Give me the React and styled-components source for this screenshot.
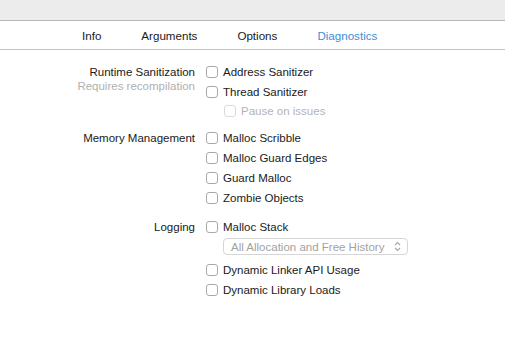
import React from 'react';
import styled, { createGlobalStyle } from 'styled-components';

const GlobalStyle = createGlobalStyle`
  html, body {
    margin: 0;
    padding: 0;
    background: #ffffff;
  }
  body {
    font-family: "Liberation Sans", Arial, sans-serif;
    font-size: 11px;
    color: #1a1a1a;
  }
`;

const Window = styled.div`
  width: 505px;
  height: 348px;
  background: #ffffff;
  overflow: hidden;
`;

const TitleBand = styled.div`
  height: 20px;
  background: #ececec;
  border-bottom: 1px solid #b8b8b8;
`;

const TabBar = styled.nav`
  height: 28px;
  display: flex;
  align-items: center;
  gap: 40px;
  padding-left: 82px;
  border-bottom: 1px solid #c4c4c4;
`;

const Tab = styled.span`
  font-size: 11.6px;
  color: ${(p) => (p.$active ? '#3d8ed6' : '#1a1a1a')};
`;

const Content = styled.div`
  padding-top: 12px;
  display: flex;
  flex-direction: column;
  gap: 9px;
`;

const Section = styled.section`
  display: grid;
  grid-template-columns: 195px 1fr;
  column-gap: 11px;
`;

const Label = styled.div`
  text-align: right;
  font-size: 11.5px;
  line-height: 20px;
`;

const Hint = styled.div`
  text-align: right;
  color: #b0b0b0;
  font-size: 11.5px;
  line-height: 9px;
`;

const Options = styled.div`
  display: flex;
  flex-direction: column;
`;

const Row = styled.label`
  display: flex;
  align-items: center;
  gap: 5px;
  height: ${(p) => (p.$short ? 17 : 20)}px;
  padding-left: ${(p) => (p.$indent ? 18 : 0)}px;
  font-size: 11.5px;
  color: ${(p) => (p.$disabled ? '#b4b4b4' : '#1a1a1a')};
`;

const Box = styled.span`
  width: 12px;
  height: 12px;
  box-sizing: border-box;
  border: 1px solid ${(p) => (p.$disabled ? '#dadada' : '#a9a9a9')};
  border-radius: 3px;
  background: #ffffff;
  flex: none;
`;

const PopupRow = styled.div`
  height: 23px;
  box-sizing: border-box;
  display: flex;
  align-items: flex-start;
  padding: 1px 0 0 17px;
`;

const Popup = styled.div`
  width: 185px;
  height: 17px;
  box-sizing: border-box;
  border: 1px solid #d6d6d6;
  border-radius: 4px;
  display: flex;
  align-items: center;
  justify-content: space-between;
  padding: 0 6px 0 7px;
  color: #a2a2a2;
  font-size: 11.5px;
`;

function Check({ label, disabled, indent, short }) {
  return (
    <Row $disabled={disabled} $indent={indent} $short={short}>
      <Box $disabled={disabled} />
      {label}
    </Row>
  );
}

function Stepper() {
  return (
    <svg width="7" height="11" viewBox="0 0 7 11">
      <path d="M1 4 L3.5 1.5 L6 4 M1 7 L3.5 9.5 L6 7" fill="none" stroke="#a8a8a8" strokeWidth="1.1" />
    </svg>
  );
}

export default function App() {
  return (
    <Window>
      <GlobalStyle />
      <TitleBand />
      <TabBar>
        <Tab>Info</Tab>
        <Tab>Arguments</Tab>
        <Tab>Options</Tab>
        <Tab $active>Diagnostics</Tab>
      </TabBar>
      <Content>
        <Section>
          <div>
            <Label>Runtime Sanitization</Label>
            <Hint>Requires recompilation</Hint>
          </div>
          <Options>
            <Check label="Address Sanitizer" />
            <Check label="Thread Sanitizer" />
            <Check label="Pause on issues" disabled indent short />
          </Options>
        </Section>
        <Section>
          <Label>Memory Management</Label>
          <Options>
            <Check label="Malloc Scribble" />
            <Check label="Malloc Guard Edges" />
            <Check label="Guard Malloc" />
            <Check label="Zombie Objects" />
          </Options>
        </Section>
        <Section>
          <Label>Logging</Label>
          <Options>
            <Check label="Malloc Stack" />
            <PopupRow>
              <Popup>
                All Allocation and Free History
                <Stepper />
              </Popup>
            </PopupRow>
            <Check label="Dynamic Linker API Usage" />
            <Check label="Dynamic Library Loads" />
          </Options>
        </Section>
      </Content>
    </Window>
  );
}
